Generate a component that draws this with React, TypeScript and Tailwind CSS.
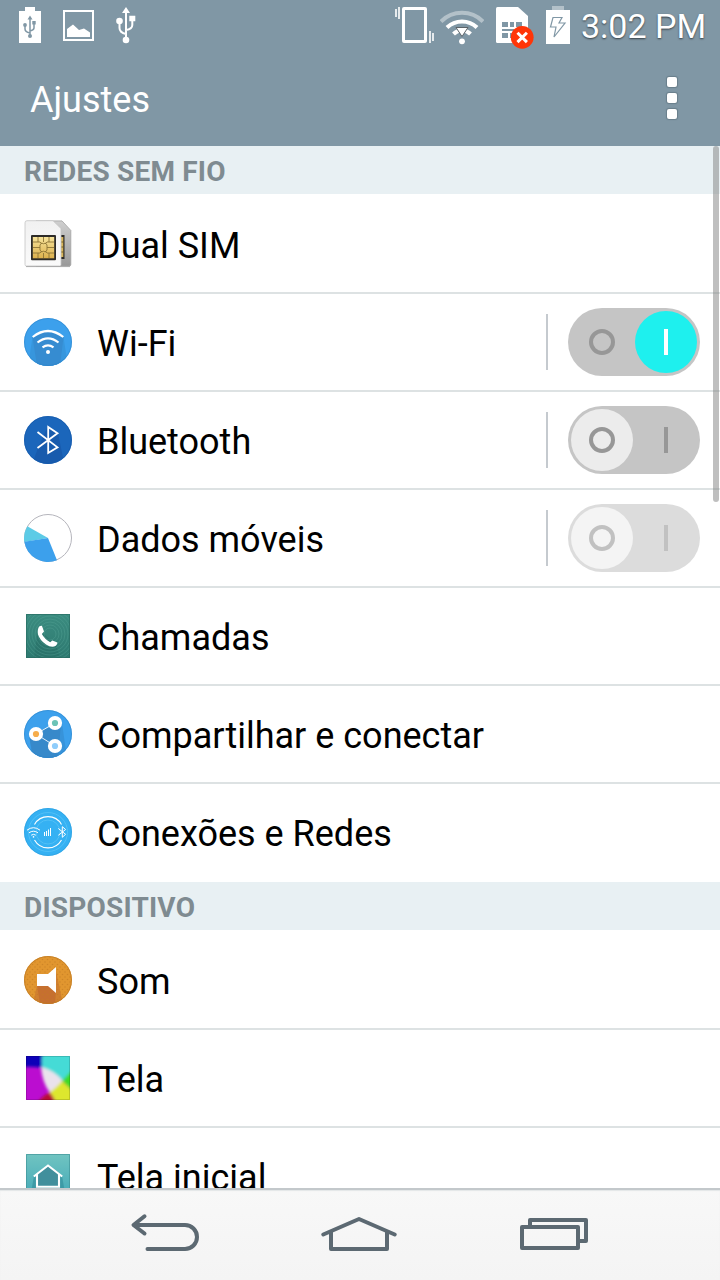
import type { ReactNode } from 'react';

type SwitchState = 'on' | 'off' | 'disabled';

interface Setting {
  label: string;
  icon: ReactNode;
  toggle?: SwitchState;
}

interface Section {
  title: string;
  items: Setting[];
}

/* ---------- Row icons ---------- */

function IconFrame({ children }: { children: ReactNode }) {
  return (
    <svg viewBox="0 0 48 48" fill="none" className="h-12 w-12 shrink-0">
      {children}
    </svg>
  );
}

function SimIcon() {
  return (
    <IconFrame>
      <defs>
        <linearGradient id="sim-back" x1="0" y1="0" x2="0" y2="1">
          <stop offset="0" stopColor="#cfcfcf" />
          <stop offset="1" stopColor="#999" />
        </linearGradient>
        <linearGradient id="sim-front" x1="0" y1="0" x2="0" y2="1">
          <stop offset="0" stopColor="#f1f1f1" />
          <stop offset="1" stopColor="#fafafa" />
        </linearGradient>
        <linearGradient id="sim-chip" x1="0" y1="0" x2="0" y2="1">
          <stop offset="0" stopColor="#f6e39b" />
          <stop offset="1" stopColor="#dcb04c" />
        </linearGradient>
      </defs>
      <path d="M12 .9h26l8.800 9.500V44.500q0 1.500-1.500 1.500H12Z" fill="url(#sim-back)" stroke="#a2a2a2" strokeWidth=".8" />
      <path d="M34 15h6.500v24H34z" fill="#2d2b27" />
      <path d="M36 17h3.300v20H36z" fill="#d9b65a" />
      <path d="M36 22h3M36 27h3M36 32h3" stroke="#75602b" />
      <path
        d="M3 .7h26L37 8.500v36q0 1.500-1.500 1.500H2.500Q1 46 1 44.500V2.800Q1 .7 3 .7Z"
        fill="url(#sim-front)"
        stroke="#c4c4c4"
        strokeWidth=".8"
      />
      <path d="M2 46.600h44" stroke="#9a9a9a" strokeWidth=".8" />
      <rect x="7" y="15" width="25" height="25.300" rx="1" fill="#2d2b27" />
      <rect x="8.800" y="17" width="21.400" height="21.300" fill="url(#sim-chip)" />
      <path
        d="M9 22h7l2 2M9 27.500h7M9 33h7l2-2M30 22h-7l-2 2M30 27.500h-7M30 33h-7l-2-2M19.500 17v5M19.500 33v5M14 17v5M25 17v5M14 33v5M25 33v5M17.500 23q2 1.500 4 0l1.500 2v5l-1.500 2q-2-1.500-4 0L16 30v-5Z"
        stroke="#8d7535"
        strokeWidth=".9"
      />
    </IconFrame>
  );
}

function WifiIcon() {
  return (
    <IconFrame>
      <clipPath id="wifi-clip">
        <circle cx="24" cy="24" r="24" />
      </clipPath>
      <circle cx="24" cy="24" r="24" fill="#3ca0ec" />
      <g clipPath="url(#wifi-clip)">
        <path d="M8.500 19 4 48h40l-4.500-29Q24 7 8.500 19Z" fill="#3796dd" />
        <path d="M8.500 19 13 48h23l3.500-29Q24 7 8.500 19Z" fill="#368cd1" />
      </g>
      <circle cx="24" cy="24" r="23.500" stroke="#2e83c8" strokeOpacity=".5" />
      <path d="M8.700 19q15.300-12 30.600 0M13.500 24.500q10.500-8.400 21 0M18.500 29.300q5.500-4 11 0" stroke="#fff" strokeWidth="2.200" />
      <circle cx="24" cy="34" r="2" fill="#fff" />
    </IconFrame>
  );
}

function BluetoothIcon() {
  return (
    <IconFrame>
      <circle cx="24" cy="24" r="24" fill="#1b66bb" />
      <path d="M24 10 34 17l5 25q-15 11-29 1l4-11Z" fill="#185bad" />
      <circle cx="24" cy="24" r="23.500" stroke="#1558a8" strokeOpacity=".6" />
      <path d="m13.500 16 20 15.300L24.200 37V11l9.300 6.200-20 14.800" stroke="#fff" strokeWidth="1.800" />
    </IconFrame>
  );
}

function DataUsageIcon() {
  return (
    <IconFrame>
      <circle cx="24" cy="24" r="23.500" fill="#fff" stroke="#b5b5bc" />
      <path d="M24 24 3.300 12.200A24 24 0 0 0 .3 28Z" fill="#5ccbe6" />
      <path d="M24 24 .3 27.700A24 24 0 0 0 33 46.200Z" fill="#3ca0ec" />
    </IconFrame>
  );
}

function CallIcon() {
  return (
    <IconFrame>
      <defs>
        <linearGradient id="call-bg" x1="0" y1="0" x2="0" y2="1">
          <stop offset="0" stopColor="#3b8c80" />
          <stop offset="1" stopColor="#2d7970" />
        </linearGradient>
        <clipPath id="call-clip">
          <path d="M2 2h44v44H2z" />
        </clipPath>
      </defs>
      <path d="M2 2h44v44H2z" fill="url(#call-bg)" />
      <path d="m14 17-4 29h26l-4-13Z" fill="#256b63" opacity=".5" />
      <g clipPath="url(#call-clip)" stroke="#5aa79a" strokeOpacity=".45" strokeWidth=".8">
        {[6, 9, 12, 15, 18, 21, 24, 27].map((r) => (
          <circle key={r} cx="26" cy="22" r={r} />
        ))}
      </g>
      <path d="M2.500 2.500h43v43h-43z" stroke="#27695f" strokeOpacity=".6" />
      <path
        d="M15.500 14.300Q17 13.400 18 13.900L20 19.500 17.900 22Q20.500 27 26.200 30.200L28.300 28.500 33.400 30.500Q33.700 32 31.800 33.700 28 36.300 22 32.500 16 28.500 14 22.500 13 17 15.500 14.300Z"
        fill="#fff"
      />
    </IconFrame>
  );
}

function ShareIcon() {
  return (
    <IconFrame>
      <clipPath id="share-clip">
        <circle cx="24" cy="24" r="24" />
      </clipPath>
      <circle cx="24" cy="24" r="24" fill="#3ca0ec" />
      <g clipPath="url(#share-clip)">
        <path d="M5 24 8 48h35l-5-35Z" fill="#3793da" />
        <path d="m5 24 4 24h25l3-34Z" fill="#3789ca" />
      </g>
      <circle cx="24" cy="24" r="23.500" stroke="#2e83c8" strokeOpacity=".5" />
      <path d="M31 13 12 24l19 12" stroke="#e8f3fc" />
      <circle cx="31" cy="13" r="7.100" fill="#fff" />
      <circle cx="12" cy="24" r="7.100" fill="#fff" />
      <circle cx="31" cy="36" r="7.100" fill="#fff" />
      <circle cx="31" cy="13" r="3.100" fill="#6bc3b6" />
      <circle cx="12" cy="24" r="3.100" fill="#f6ad4b" />
      <circle cx="31" cy="36" r="3.100" fill="#8fcdfb" />
    </IconFrame>
  );
}

function NetworksIcon() {
  return (
    <IconFrame>
      <circle cx="24" cy="24" r="24" fill="#35b1f3" />
      <circle cx="24" cy="24" r="23.500" stroke="#2b9cdb" strokeOpacity=".5" />
      <circle cx="24" cy="24" r="19.500" stroke="#51c0f7" />
      <circle cx="24" cy="24" r="12" stroke="#51c0f7" />
      <path d="M10.500 16.500a15.500 15.500 0 0 1 27 0M10.500 32a15.500 15.500 0 0 0 27 0" stroke="#fff" strokeWidth="1.100" />
      <path d="M3 22.200q6.500-5 13 0M5 24.800q4.500-3.200 9 0M7.200 27.200q2.300-1.700 4.600 0" stroke="#fff" />
      <circle cx="9.500" cy="28.900" r=".8" fill="#fff" />
      <path d="M20.500 28v-4M22.500 28v-5M24.500 28v-6.500M26.500 28v-8" stroke="#fff" />
      <path d="m34.300 20.500 7.300 5.800-3.300 3V18.700l3.300 2.800-7.300 5.800" stroke="#fff" />
    </IconFrame>
  );
}

function SoundIcon() {
  return (
    <IconFrame>
      <defs>
        <pattern id="sound-dots" width="5" height="5" patternUnits="userSpaceOnUse">
          <circle cx="1" cy="1" r=".8" fill="#c27a22" />
          <circle cx="3.500" cy="3.500" r=".8" fill="#c27a22" />
        </pattern>
        <clipPath id="sound-clip">
          <circle cx="24" cy="24" r="24" />
        </clipPath>
      </defs>
      <circle cx="24" cy="24" r="24" fill="#e1962f" />
      <g clipPath="url(#sound-clip)">
        <path d="M13 29 9 48h30l-7-33Z" fill="#d08030" />
        <path d="m13 29 3 19h15l1-14-8-5Z" fill="#c66f30" />
      </g>
      <circle cx="24" cy="24" r="24" fill="url(#sound-dots)" opacity=".6" />
      <circle cx="24" cy="24" r="23.500" stroke="#bd7924" strokeOpacity=".7" />
      <path d="M13 18h11l8-7v26l-8-7H13Z" fill="#fff" />
    </IconFrame>
  );
}

function DisplayIcon() {
  return (
    <IconFrame>
      <defs>
        <clipPath id="display-clip">
          <path d="M2 2h44v44H2z" />
        </clipPath>
        <filter id="display-soft" x="-20%" y="-20%" width="140%" height="140%">
          <feGaussianBlur stdDeviation="1.700" />
        </filter>
      </defs>
      <g clipPath="url(#display-clip)">
        <path d="M2 2h44v44H2z" fill="#bb0dd0" />
        <g filter="url(#display-soft)">
          <path d="M-3-3h22q-2 9-1 17-9-2-21-1Z" fill="#1100b8" />
          <path d="M19-3h32v19L38 27Q29 18 18 14 17 6 19-3Z" fill="#44dbd6" />
          <path d="M17 13q13 3 22 14-6 6-13 12Q18 28 17 13Z" fill="#eae2ec" />
          <path d="m38 27 13-14v26Z" fill="#3edc25" />
          <path d="m38 27 13 12v12H32q-2-8-6.500-12.500Q33 33 38 27Z" fill="#dde72e" />
          <path d="M12 52q4-9 13.500-13.500Q30 43 32 52Z" fill="#b80b35" />
        </g>
      </g>
      <path d="M2.500 2.500h43v43h-43z" stroke="#000" strokeOpacity=".15" />
    </IconFrame>
  );
}

function HomeScreenIcon() {
  return (
    <IconFrame>
      <defs>
        <linearGradient id="home-bg" x1="0" y1="0" x2="0" y2="1">
          <stop offset="0" stopColor="#70c4c1" />
          <stop offset="1" stopColor="#42a8b7" />
        </linearGradient>
      </defs>
      <path d="M2 2h44v44H2z" fill="url(#home-bg)" />
      <path d="m10 24-4 22h36l-4-22Z" fill="#35919e" opacity=".7" />
      <path d="M13 22 24 14l11 8v12H13Z" fill="#418f9c" />
      <path d="M2.500 2.500h43v43h-43z" stroke="#3d8f95" strokeOpacity=".6" />
      <path d="m9.800 24.500 14.200-11 14.200 11M13 22v12.700h22V22" stroke="#fff" strokeWidth="2.100" />
    </IconFrame>
  );
}

/* ---------- Data ---------- */

const SECTIONS: Section[] = [
  {
    title: 'REDES SEM FIO',
    items: [
      { label: 'Dual SIM', icon: <SimIcon /> },
      { label: 'Wi-Fi', icon: <WifiIcon />, toggle: 'on' },
      { label: 'Bluetooth', icon: <BluetoothIcon />, toggle: 'off' },
      { label: 'Dados móveis', icon: <DataUsageIcon />, toggle: 'disabled' },
      { label: 'Chamadas', icon: <CallIcon /> },
      { label: 'Compartilhar e conectar', icon: <ShareIcon /> },
      { label: 'Conexões e Redes', icon: <NetworksIcon /> },
    ],
  },
  {
    title: 'DISPOSITIVO',
    items: [
      { label: 'Som', icon: <SoundIcon /> },
      { label: 'Tela', icon: <DisplayIcon /> },
      { label: 'Tela inicial', icon: <HomeScreenIcon /> },
    ],
  },
];

/* ---------- Status bar ---------- */

function StatusBar() {
  return (
    <div className="flex h-[50px] items-center justify-between pr-[14px] pl-[19px]">
      <div className="flex items-center">
        <svg viewBox="0 0 22 50" fill="none" className="h-[50px] w-[22px]">
          <path d="M6 7h10v4h6v32H0V11h6z" fill="#fff" />
          <path d="M11 18v18M11 33q-5-1-5-4v-4M11 31q4-1 4-3v-5" stroke="#8097a5" strokeWidth="1.500" />
          <path d="m11 15.500 2.500 4h-5zM13.300 21h3.400v3.400h-3.400z" fill="#8097a5" />
          <circle cx="6" cy="25" r="1.900" fill="#8097a5" />
          <circle cx="11" cy="36" r="2" fill="#8097a5" />
        </svg>
        <svg viewBox="0 0 31 50" fill="none" className="ml-[22px] h-[50px] w-[31px]">
          <path d="M1 11h29v29H1z" stroke="#fff" strokeWidth="2" />
          <path d="M4 37v-8l6-4.500 6 5.500 5-1.500 6 4V37z" fill="#fff" />
        </svg>
        <svg viewBox="0 0 20 50" fill="none" className="ml-[22px] h-[50px] w-5">
          <path d="M10 12v28M10 34q-6.500-1.500-6.500-6v-6M10 30q6.300-1 6.300-5v-6" stroke="#fff" strokeWidth="2" />
          <path d="m10 7 4 6H6zM13.300 15.700h6v5.500h-6z" fill="#fff" />
          <circle cx="3.500" cy="21" r="3.300" fill="#fff" />
          <circle cx="10" cy="40" r="3.300" fill="#fff" />
        </svg>
      </div>

      <div className="flex items-center">
        {/* vibrate */}
        <svg viewBox="395 0 39 50" fill="none" className="h-[50px] w-[39px]">
          <rect x="403.500" y="8.500" width="22" height="33" rx=".5" stroke="#fff" strokeWidth="3" />
          <path d="M396 9v8M399 7v12M430 31v12M433 33v8" stroke="#fff" strokeWidth="1.600" />
        </svg>
        {/* wifi signal with traffic arrow */}
        <svg viewBox="440 0 44 50" fill="none" className="ml-[6px] h-[50px] w-11">
          <path d="M441 21.500a29.500 29.500 0 0 1 42 0" stroke="#b3c1c9" strokeWidth="4" />
          <path d="M447 27.500a21.500 21.500 0 0 1 30 0" stroke="#fff" strokeWidth="4" />
          <path d="M453.500 34a12 12 0 0 1 17 0" stroke="#fff" strokeWidth="4" />
          <circle cx="462" cy="41.300" r="2.900" fill="#fff" />
          <path d="M456 27.500h12L462 36.500Z" fill="#fff" stroke="#5b6368" strokeWidth="1" />
        </svg>
        {/* sim error */}
        <svg viewBox="496 0 38 50" fill="none" className="ml-3 h-[50px] w-[38px]">
          <path d="M496 8.500q0-1.500 1.500-1.500H518l10 9v25.500q0 1.500-1.500 1.500h-29q-1.500 0-1.500-1.500z" fill="#fff" />
          <path d="M502 22h6v5h-6zM510 22h4v5h-4zM516 22h6v5h-6zM502 29h12v2h-12zM502 33h6v5h-6zM510 33h5v5h-5z" fill="#8097a5" />
          <circle cx="522.200" cy="37.300" r="11.400" fill="#ff3508" />
          <path d="m517.500 32.700 9.400 9.400m0-9.400-9.400 9.400" stroke="#fff" strokeWidth="3" />
        </svg>
        {/* battery charging */}
        <svg viewBox="546 0 24 50" fill="none" className="ml-3 h-[50px] w-6">
          <path d="M552 6h12v4h-12z" fill="#b3c1c9" />
          <path d="M546 10h24v34h-24z" fill="#fff" />
          <path d="M553 17.500h9l-3 5.500h6l-11 14 2-10h-5.500z" stroke="#8097a5" strokeWidth="1.200" />
        </svg>
        <span className="ml-[11px] w-[125px] pt-[3px] text-[34px] leading-[47px] whitespace-nowrap text-white [text-shadow:0_1px_2px_rgba(0,0,0,0.6)]">
          3:02 PM
        </span>
      </div>
    </div>
  );
}

function TitleBar() {
  return (
    <header className="flex h-24 items-center justify-between pr-[43px] pl-[30px]">
      <h1 className="pt-1 text-[36px] text-white">Ajustes</h1>
      <div className="flex flex-col gap-1.5">
        {[0, 1, 2].map((dot) => (
          <span key={dot} className="h-2.5 w-2.5 rounded-[2px] bg-white shadow-[0_0_1px_1px_rgba(70,90,100,0.4)]" />
        ))}
      </div>
    </header>
  );
}

/* ---------- List ---------- */

const TRACK: Record<SwitchState, string> = {
  on: 'bg-[#c5c5c5]',
  off: 'bg-[#c5c5c5]',
  disabled: 'bg-[#dcdcdc]',
};

const KNOB: Record<SwitchState, string> = {
  on: 'bg-[#1ef0ee]',
  off: 'bg-[#ececec]',
  disabled: 'bg-[#f4f4f4]',
};

function Toggle({ state }: { state: SwitchState }) {
  const isOn = state === 'on';
  const ring = state === 'disabled' ? 'border-[#c1c1c1]' : 'border-[#979797]';
  const bar = isOn ? 'bg-white' : state === 'disabled' ? 'bg-[#c1c1c1]' : 'bg-[#979797]';

  return (
    <div className={`flex h-[68px] w-[132px] items-center justify-between rounded-full px-[3px] ${TRACK[state]}`}>
      <div className={`flex h-[62px] w-[62px] items-center justify-center rounded-full ${isOn ? '' : KNOB[state]}`}>
        <span className={`h-[26px] w-[26px] rounded-full border-4 ${ring}`} />
      </div>
      <div className={`flex h-[62px] w-[62px] items-center justify-center rounded-full ${isOn ? KNOB[state] : ''}`}>
        <span className={`h-[26px] w-1 ${bar}`} />
      </div>
    </div>
  );
}

function SettingRow({ label, icon, toggle }: Setting) {
  return (
    <li className="flex h-[98px] items-center border-b-2 border-[#dde2e3] pr-5 pl-6 last:border-transparent">
      {icon}
      <span className="mt-[3px] ml-[25px] flex-1 text-[36px] leading-[48px] text-black">{label}</span>
      {toggle && (
        <div className="flex items-center gap-5">
          <span className="h-14 w-0.5 bg-[#c5cacf]" />
          <Toggle state={toggle} />
        </div>
      )}
    </li>
  );
}

function NavBar() {
  return (
    <nav className="flex h-[92px] shrink-0 items-start justify-between border-t-2 border-[#c3c8cb] bg-linear-to-b from-[#f8f8f8] to-[#f4f4f4] px-[130px] pt-[22px] shadow-[inset_0_1px_1px_#e3e6e7]">
      <svg viewBox="130 1212 72 42" fill="none" className="h-[42px] w-[72px]" stroke="#5c6972" strokeWidth="4" strokeLinecap="round" strokeLinejoin="round">
        <path d="M134 1225h51a12 12 0 0 1 0 24h-37.500M144.500 1216.300l-11 8.700 11 8.500" />
      </svg>
      <svg viewBox="321 1212 78 42" fill="none" className="h-[42px] w-[78px]" stroke="#5c6972" strokeWidth="4" strokeLinecap="round">
        <path d="m323.300 1234.500 35.700-15.500 35.700 15.500M331 1232v17h56v-17" strokeLinejoin="round" />
      </svg>
      <svg viewBox="518 1212 72 42" fill="none" className="h-[42px] w-[72px]" stroke="#5c6972" strokeWidth="4" strokeLinejoin="round">
        <path d="M522 1227h56v21h-56zM530 1227v-7h56v21h-8" />
      </svg>
    </nav>
  );
}

export default function App() {
  return (
    <div className="flex h-[1280px] w-[720px] flex-col overflow-hidden bg-white font-[Roboto,sans-serif]">
      <div className="shrink-0 bg-[#8097a5]">
        <StatusBar />
        <TitleBar />
      </div>

      <main className="relative min-h-0 flex-1 overflow-hidden">
        {SECTIONS.map((section) => (
          <section key={section.title}>
            <h2 className="flex h-12 items-center bg-[#e8f0f3] pt-1 pl-6 text-[28px] font-bold tracking-[0.2px] text-[#7f8b91]">
              {section.title}
            </h2>
            <ul className="pt-0.5">
              {section.items.map((item) => (
                <SettingRow key={item.label} {...item} />
              ))}
            </ul>
          </section>
        ))}
        {/* scroll thumb */}
        <div className="absolute top-0 right-px h-[356px] w-1.5 rounded-full bg-[#808080]/50" />
      </main>

      <NavBar />
    </div>
  );
}
